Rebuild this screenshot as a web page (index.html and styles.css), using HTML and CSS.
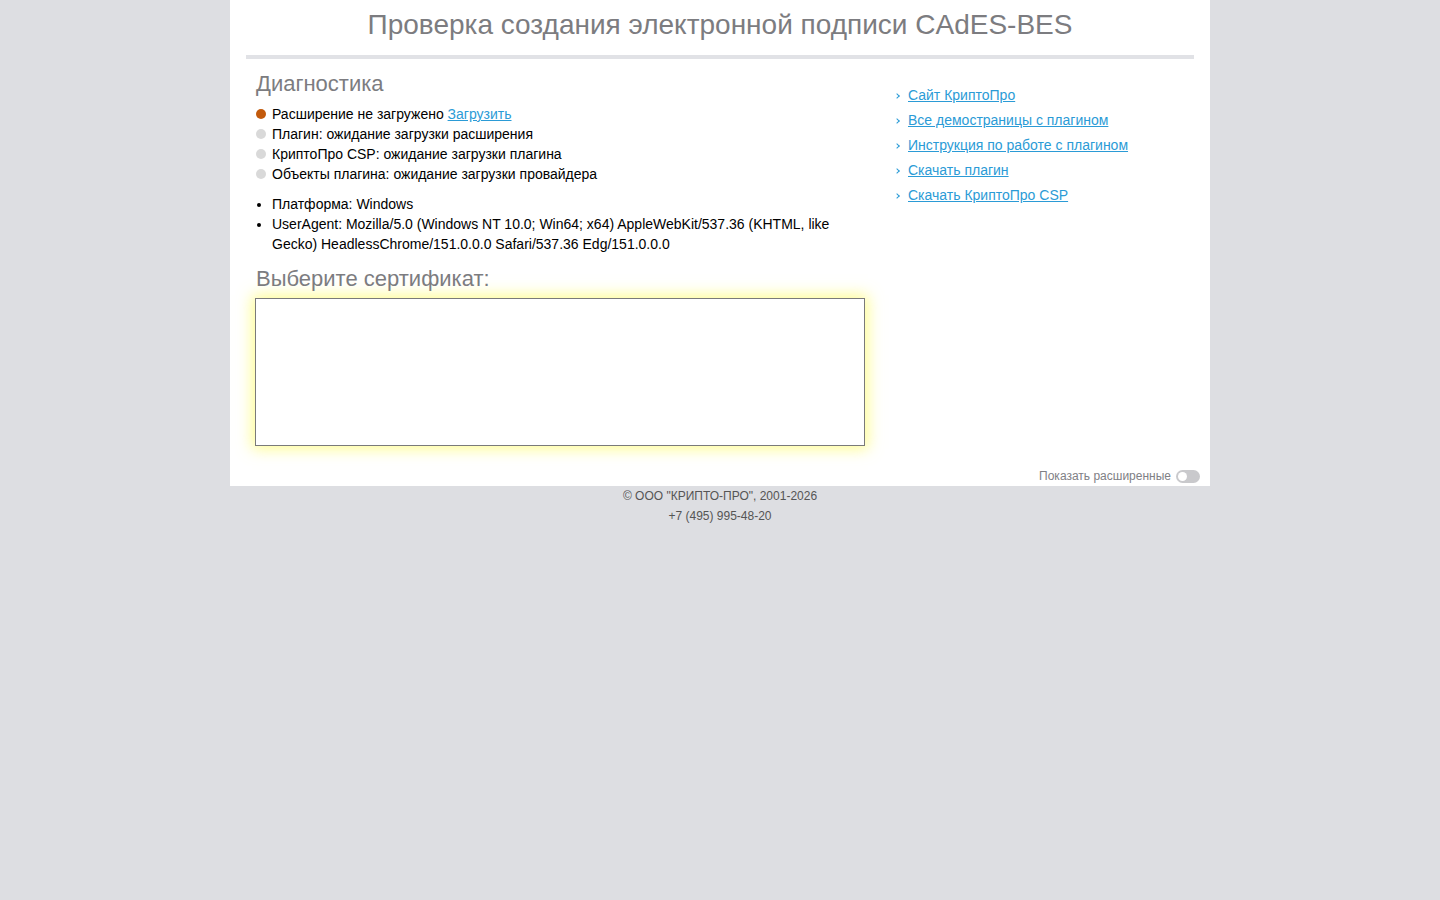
FILE: index.html
```html
<!DOCTYPE html>
<html lang="ru">
<head>
  <meta charset="UTF-8">
  <title>Проверка создания электронной подписи CAdES-BES</title>
  <link rel="stylesheet" href="styles.css">
</head>
<body>

<div class="page">
  <h1 class="title">Проверка создания электронной подписи CAdES-BES</h1>

  <div class="content">
    <section class="main-col">
      <h2>Диагностика</h2>
      <ul class="status">
        <li><span class="dot fail"></span>Расширение не загружено <a href="#">Загрузить</a></li>
        <li><span class="dot"></span>Плагин: ожидание загрузки расширения</li>
        <li><span class="dot"></span>КриптоПро CSP: ожидание загрузки плагина</li>
        <li><span class="dot"></span>Объекты плагина: ожидание загрузки провайдера</li>
      </ul>
      <ul class="info">
        <li>Платформа: Windows</li>
        <li>UserAgent: Mozilla/5.0 (Windows NT 10.0; Win64; x64) AppleWebKit/537.36 (KHTML, like Gecko) HeadlessChrome/151.0.0.0 Safari/537.36 Edg/151.0.0.0</li>
      </ul>

      <h2>Выберите сертификат:</h2>
      <div class="cert-list"></div>
    </section>

    <aside class="links">
      <ul>
        <li><a href="#">Сайт КриптоПро</a></li>
        <li><a href="#">Все демостраницы с плагином</a></li>
        <li><a href="#">Инструкция по работе с плагином</a></li>
        <li><a href="#">Скачать плагин</a></li>
        <li><a href="#">Скачать КриптоПро CSP</a></li>
      </ul>
    </aside>
  </div>

  <div class="advanced">
    <span>Показать расширенные</span>
    <span class="toggle"></span>
  </div>
</div>

<footer>
  <p>© ООО "КРИПТО-ПРО", 2001-2026</p>
  <p>+7 (495) 995-48-20</p>
</footer>

</body>
</html>
```

FILE: styles.css
```css
:root {
  --grey-text: #7c7c80;
  --link: #2b9bd6;
}
* { box-sizing: border-box; margin: 0; padding: 0; }
body {
  font-family: "Liberation Sans", Arial, sans-serif;
  background: #dddee2;
  color: #000;
}

/* ——— white page ——— */
.page {
  width: 980px;
  margin: 0 auto;
  background: #fff;
  padding: 0 16px 3px;
}
.title {
  font-size: 28px;
  font-weight: normal;
  color: var(--grey-text);
  text-align: center;
  line-height: 32px;
  padding: 9px 0 14px;
  border-bottom: 4px solid #e1e2e6;
}

.content {
  display: flex;
  padding: 0 10px;
}
.main-col { width: 610px; }
h2 {
  font-size: 22px;
  font-weight: normal;
  color: var(--grey-text);
  line-height: 26px;
}
.main-col h2:first-child { margin-top: 12px; }

/* diagnostics */
.status { list-style: none; margin-top: 7px; }
.status li {
  font-size: 14px;
  line-height: 20px;
}
.dot {
  display: inline-block;
  vertical-align: 0;
  width: 10px;
  height: 10px;
  border-radius: 50%;
  background: #d9d9d9;
  margin-right: 6px;
}
.dot.fail { background: #c25a0c; }
a { color: var(--link); }

.info {
  margin-top: 10px;
  padding-left: 16px;
  font-size: 14px;
  line-height: 20px;
}
.info + h2 { margin-top: 12px; }

.cert-list {
  margin-top: 6px;
  height: 148px;
  width: 610px;
  margin-left: -1px;
  border: 1px solid #7a7a7a;
  box-shadow: 0 0 14px 3px rgba(255, 252, 110, .75);
}

/* ——— links ——— */
.links { margin-left: 29px; padding-top: 26px; }
.links ul { list-style: none; }
.links li {
  font-size: 14px;
  line-height: 20px;
  margin-bottom: 5px;
  padding-left: 13px;
  position: relative;
}
.links li::before {
  content: "";
  position: absolute;
  left: 0;
  top: 9px;
  width: 3px;
  height: 3px;
  border-top: 1.5px solid var(--link);
  border-right: 1.5px solid var(--link);
  transform: rotate(45deg);
}

/* ——— advanced toggle ——— */
.advanced {
  display: flex;
  justify-content: flex-end;
  align-items: center;
  gap: 5px;
  margin-top: 23px;
  margin-right: -6px;
  font-size: 12px;
  color: #808085;
  line-height: 14px;
}
.toggle {
  width: 24px;
  height: 13px;
  border-radius: 7px;
  background: #c9c9cc;
  position: relative;
}
.toggle::after {
  content: "";
  position: absolute;
  left: 2px;
  top: 2px;
  width: 9px;
  height: 9px;
  border-radius: 50%;
  background: #fff;
}

/* ——— footer ——— */
footer {
  text-align: center;
  font-size: 12px;
  color: #555;
  line-height: 20px;
}
```
